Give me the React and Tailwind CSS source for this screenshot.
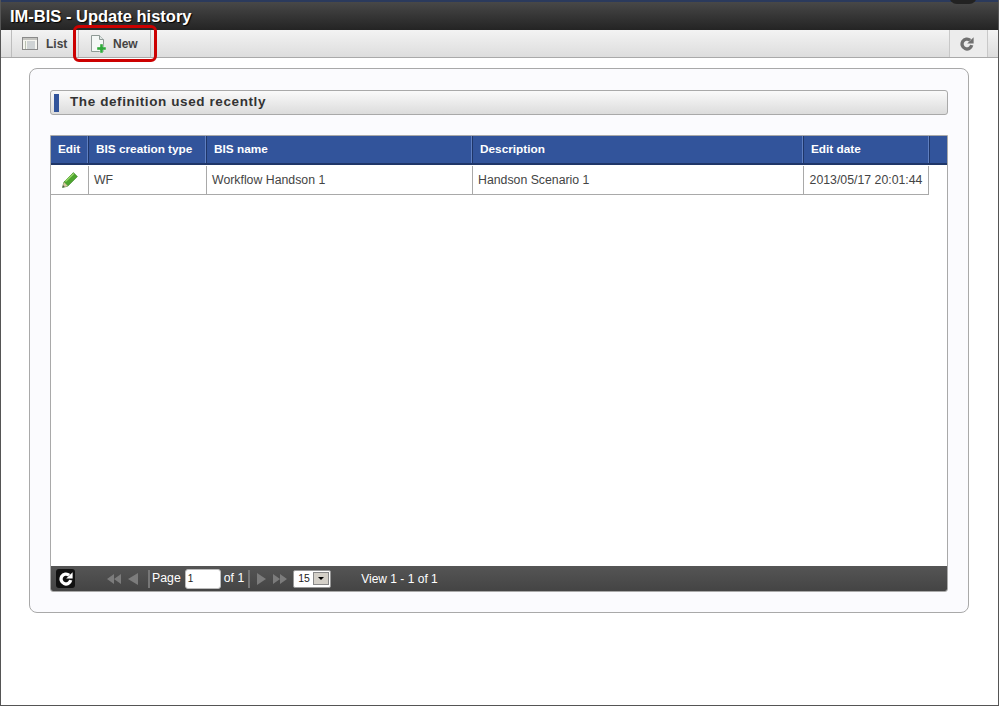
import React from "react";

const columns = [
  { label: "Edit", width: "w-[38px]" },
  { label: "BIS creation type", width: "w-[118px]" },
  { label: "BIS name", width: "w-[266px]" },
  { label: "Description", width: "w-[331px]" },
  { label: "Edit date", width: "w-[126px]" },
];

const ReloadIcon = ({ className, color }) => (
  <svg viewBox="0 0 16 16" className={className}>
    <path
      d="M13.4 9.4A5.6 5.6 0 1 1 11.6 3.8"
      fill="none"
      stroke={color}
      strokeWidth="3.8"
    />
    <path d="M8.2 7.4h7.4V0.4z" fill={color} />
  </svg>
);

const ListIcon = () => (
  <svg viewBox="0 0 16 13" className="h-[13px] w-[16px]">
    <rect x="0.5" y="0.5" width="15" height="12" fill="#f5f5f0" stroke="#8a8a8a" />
    <rect x="1" y="1" width="14" height="2" fill="#c4c4c0" />
    <path d="M3 5h1M3 7h1M3 9h1M3 11h1" stroke="#7a8a70" />
    <path d="M5 5h8M5 7h8M5 9h8M5 11h8" stroke="#a8b0b8" />
  </svg>
);

const NewIcon = () => (
  <svg viewBox="0 0 16 18" className="h-[18px] w-[16px]">
    <path d="M1.5 0.5h8l4 4v12h-12z" fill="#f4f8f6" stroke="#8f9a96" />
    <path d="M9.5 0.5v4h4" fill="#dfe6e3" stroke="#8f9a96" />
    <path d="M10 9h3v3h3v3h-3v3h-3v-3H7v-3h3z" fill="#2fa83a" stroke="#ffffff" strokeWidth="0.4" />
  </svg>
);

const PencilIcon = () => (
  <svg viewBox="0 0 16 16" className="h-[16px] w-[16px]">
    <path d="M0.5 15.5l1.4-5.4L11.4 0.6l4 4-9.5 9.5z" fill="#4ea52f" stroke="#2f7a1e" strokeWidth="0.6" />
    <path d="M3.4 9.6L11.8 1.6" stroke="#9ad86a" strokeWidth="1.4" />
    <path d="M0.5 15.5l1.4-5.4 4 4z" fill="#d9c7a2" />
    <path d="M0.5 15.5l0.6-2.4 1.8 1.8z" fill="#555" />
  </svg>
);

const DoubleLeft = () => (
  <svg viewBox="0 0 14 10" className="h-[10px] w-[14px]">
    <path d="M7 0v10L0 5zM14 0v10L7 5z" fill="#7c7c7c" />
  </svg>
);

const SingleLeft = () => (
  <svg viewBox="0 0 10 12" className="h-[12px] w-[10px]">
    <path d="M10 0v12L0 6z" fill="#7c7c7c" />
  </svg>
);

const SingleRight = () => (
  <svg viewBox="0 0 9 12" className="h-[12px] w-[9px]">
    <path d="M0 0v12l9-6z" fill="#7c7c7c" />
  </svg>
);

const DoubleRight = () => (
  <svg viewBox="0 0 14 10" className="h-[10px] w-[14px]">
    <path d="M0 0v10l7-5zM7 0v10l7-5z" fill="#7c7c7c" />
  </svg>
);

export default function App() {
  return (
    <div
      className="relative flex h-[706px] w-[999px] flex-col overflow-hidden border-x border-b border-[#555] bg-white text-[#333]"
      style={{ fontFamily: '"Liberation Sans", Arial, sans-serif' }}
    >
      <div className="-mx-px h-[2px] shrink-0 bg-[#2b3a5c]" />
      <div className="-mx-px flex h-[28px] shrink-0 items-center bg-gradient-to-b from-[#484848] to-[#242424] pl-[10px] pt-[1px] text-[16.5px] font-bold leading-none text-white [text-shadow:1px_1px_1px_#000]">
        IM-BIS - Update history
      </div>
      <div className="absolute right-[21px] top-[-12px] h-[16px] w-[28px] rounded-full bg-[#222]" />

      <div className="flex h-[28px] shrink-0 items-stretch border-b border-[#a9a9a9] bg-gradient-to-b from-[#f3f3f3] to-[#dddddd] text-[12px] font-bold text-[#444]">
        <div className="ml-[10px] flex w-[68px] items-center border-x border-[#bdbdbd] pl-[10px]">
          <ListIcon />
          <span className="ml-[8px]">List</span>
        </div>
        <div className="flex w-[72px] items-center border-r border-[#bdbdbd] pl-[11px]">
          <NewIcon />
          <span className="ml-[7px]">New</span>
        </div>
        <div className="ml-auto mr-[10px] flex w-[39px] items-center justify-center border-x border-[#c8c8c8] bg-[#ececec] pr-[3px]">
          <ReloadIcon className="h-[14px] w-[14px]" color="#707070" />
        </div>
      </div>

      {/* red highlight added over the toolbar */}
      <div className="absolute left-[72px] top-[25px] h-[37px] w-[84px] rounded-[6px] border-[3px] border-[#cc0000]" />

      <div className="ml-[28px] mt-[10px] flex h-[545px] w-[940px] flex-col rounded-[8px] border border-[#a9a9a9] bg-[#fbfbfe] px-[20px] pt-[21px]">
        <div className="flex h-[25px] items-center rounded-[3px] border border-[#a9a9a9] bg-gradient-to-b from-[#fafafa] to-[#dcdcdc] pl-[3px]">
          <div className="h-[18px] w-[5px] bg-[#32549b]" />
          <span className="ml-[11px] text-[13.5px] font-bold tracking-[0.6px] text-[#333]">
            The definition used recently
          </span>
        </div>

        <div className="mt-[20px] flex h-[457px] flex-col rounded-b-[3px] border border-[#a9a9a9] bg-white">
          <div className="flex h-[29px] shrink-0 border-b-2 border-[#1f3668] bg-[#32549b] text-[11.8px] font-bold text-white">
            {columns.map((col) => (
              <div
                key={col.label}
                className={`${col.width} flex items-center justify-start border-r border-[#1f3668] pl-[7px] shadow-[inset_-1px_0_0_#5f7fc0]`}
              >
                {col.label}
              </div>
            ))}
          </div>

          <div className="flex-1">
            <div className="flex h-[30px] w-[878px] border-b border-[#a9a9a9] pt-[1px] text-[12.3px] text-[#444]">
              <div className="flex w-[38px] items-center justify-center border-r border-[#a9a9a9]">
                <PencilIcon />
              </div>
              <div className="flex w-[118px] items-center border-r border-[#a9a9a9] pl-[5px]">WF</div>
              <div className="flex w-[266px] items-center border-r border-[#a9a9a9] pl-[5px]">Workflow Handson 1</div>
              <div className="flex w-[331px] items-center border-r border-[#a9a9a9] pl-[5px]">Handson Scenario 1</div>
              <div className="flex w-[125px] items-center justify-center border-r border-[#a9a9a9]">2013/05/17 20:01:44</div>
            </div>
          </div>

          <div className="flex h-[25px] shrink-0 items-center rounded-b-[2px] bg-gradient-to-b from-[#555555] to-[#444444] text-[12.3px] text-white">
            <div className="ml-[5px] flex h-[19px] w-[19px] items-center justify-center rounded-[3px] bg-[#111]">
              <ReloadIcon className="h-[14px] w-[14px]" color="#ffffff" />
            </div>
            <div className="ml-[32px] flex items-center gap-[7px]">
              <DoubleLeft />
              <SingleLeft />
            </div>
            <div className="ml-[10px] h-[18px] w-[2px] bg-[#777]" />
            <span className="ml-[2px]">Page</span>
            <div className="ml-[4px] flex h-[20px] w-[36px] items-center rounded-[3px] border border-[#bbb] bg-white pl-[2px] text-[10px] text-[#222]">
              1
            </div>
            <span className="ml-[3px]">of 1</span>
            <div className="ml-[4px] h-[18px] w-[2px] bg-[#777]" />
            <div className="ml-[7px] flex items-center gap-[7px]">
              <SingleRight />
              <DoubleRight />
            </div>
            <div className="ml-[6px] flex h-[18px] w-[38px] items-center justify-between rounded-[2px] border border-[#999] bg-white pl-[4px] pr-[1px] text-[10.5px] text-[#222]">
              15
              <div className="flex h-[13px] w-[16px] items-center justify-center border border-[#888] bg-[#d4d0c8]">
                <div className="h-0 w-0 border-x-[3px] border-t-[3px] border-x-transparent border-t-black" />
              </div>
            </div>
            <span className="ml-[30px] pt-[1px] text-[12px]">View 1 - 1 of 1</span>
          </div>
        </div>
      </div>
    </div>
  );
}
